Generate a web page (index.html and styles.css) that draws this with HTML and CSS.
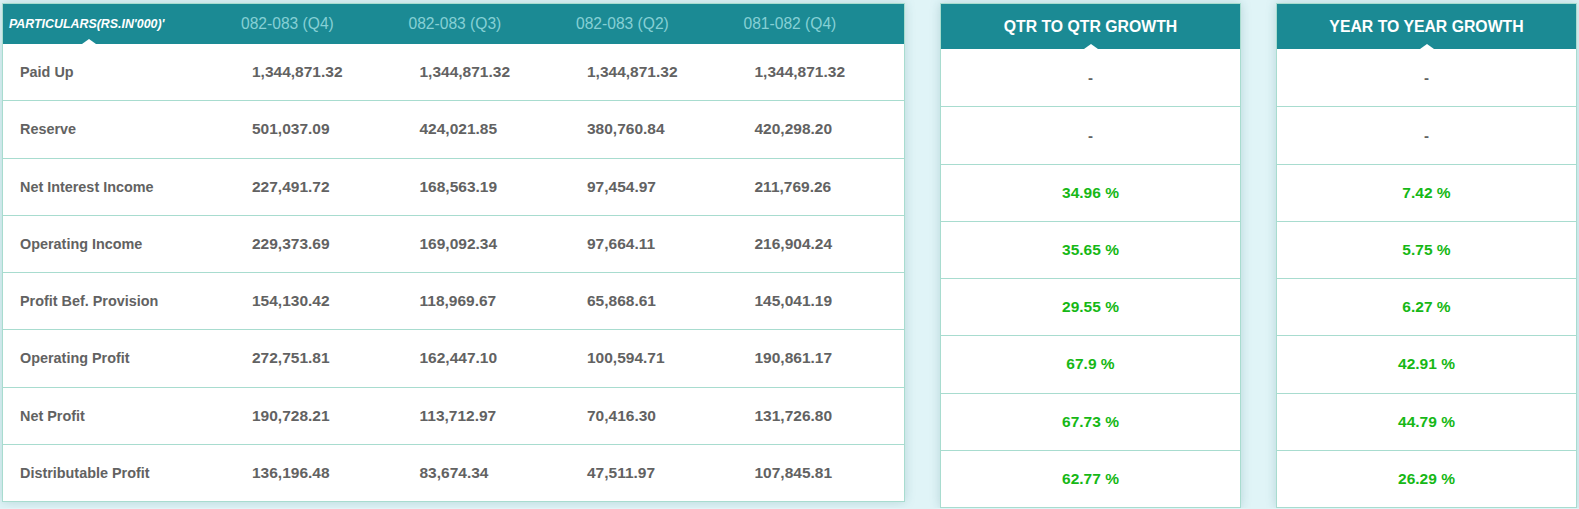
FILE: index.html
```html
<!DOCTYPE html>
<html lang="en">
<head>
<meta charset="utf-8">
<title>Financial Growth</title>
<link rel="stylesheet" href="styles.css">
</head>
<body>
<div class="wrap">
  <section class="card main">
    <div class="head">
      <div class="cell label-h">PARTICULARS(RS.IN'000)'</div>
      <div class="cell num-h">082-083 (Q4)</div>
      <div class="cell num-h">082-083 (Q3)</div>
      <div class="cell num-h">082-083 (Q2)</div>
      <div class="cell num-h">081-082 (Q4)</div>
    </div>
    <div class="row"><div class="cell label">Paid Up</div><div class="cell num">1,344,871.32</div><div class="cell num">1,344,871.32</div><div class="cell num">1,344,871.32</div><div class="cell num">1,344,871.32</div></div>
    <div class="row"><div class="cell label">Reserve</div><div class="cell num">501,037.09</div><div class="cell num">424,021.85</div><div class="cell num">380,760.84</div><div class="cell num">420,298.20</div></div>
    <div class="row"><div class="cell label">Net Interest Income</div><div class="cell num">227,491.72</div><div class="cell num">168,563.19</div><div class="cell num">97,454.97</div><div class="cell num">211,769.26</div></div>
    <div class="row"><div class="cell label">Operating Income</div><div class="cell num">229,373.69</div><div class="cell num">169,092.34</div><div class="cell num">97,664.11</div><div class="cell num">216,904.24</div></div>
    <div class="row"><div class="cell label">Profit Bef. Provision</div><div class="cell num">154,130.42</div><div class="cell num">118,969.67</div><div class="cell num">65,868.61</div><div class="cell num">145,041.19</div></div>
    <div class="row"><div class="cell label">Operating Profit</div><div class="cell num">272,751.81</div><div class="cell num">162,447.10</div><div class="cell num">100,594.71</div><div class="cell num">190,861.17</div></div>
    <div class="row"><div class="cell label">Net Profit</div><div class="cell num">190,728.21</div><div class="cell num">113,712.97</div><div class="cell num">70,416.30</div><div class="cell num">131,726.80</div></div>
    <div class="row"><div class="cell label">Distributable Profit</div><div class="cell num">136,196.48</div><div class="cell num">83,674.34</div><div class="cell num">47,511.97</div><div class="cell num">107,845.81</div></div>
  </section>

  <section class="card growth">
    <div class="ghead">QTR TO QTR GROWTH</div>
    <div class="grow dash">-</div>
    <div class="grow dash">-</div>
    <div class="grow pct">34.96 %</div>
    <div class="grow pct">35.65 %</div>
    <div class="grow pct">29.55 %</div>
    <div class="grow pct">67.9 %</div>
    <div class="grow pct">67.73 %</div>
    <div class="grow pct">62.77 %</div>
  </section>

  <section class="card growth">
    <div class="ghead">YEAR TO YEAR GROWTH</div>
    <div class="grow dash">-</div>
    <div class="grow dash">-</div>
    <div class="grow pct">7.42 %</div>
    <div class="grow pct">5.75 %</div>
    <div class="grow pct">6.27 %</div>
    <div class="grow pct">42.91 %</div>
    <div class="grow pct">44.79 %</div>
    <div class="grow pct">26.29 %</div>
  </section>
</div>
</body>
</html>
```

FILE: styles.css
```css
* { box-sizing: border-box; }

html, body {
  margin: 0;
  padding: 0;
  background: #e0f4f7;
  font-family: "Liberation Sans", Arial, sans-serif;
}

.wrap {
  display: flex;
  align-items: flex-start;
  gap: 35px;
  padding: 3px 0 0 2px;
}

.card {
  background: #fff;
  border: 1px solid #a8dccf;
  box-shadow: 0 0 10px rgba(40, 110, 120, 0.22);
}

.main {
  width: 903px;
}

.head {
  position: relative;
  display: flex;
  height: 40px;
  background: #1b8a94;
  border-bottom: 1px solid #1b8a94;
}

.head::after {
  content: "";
  position: absolute;
  left: 79px;
  bottom: -1px;
  width: 0;
  height: 0;
  border-left: 7px solid transparent;
  border-right: 7px solid transparent;
  border-bottom: 5px solid #fff;
}

.cell {
  display: flex;
  align-items: center;
}

.label-h,
.label {
  width: 231px;
  flex: none;
}

.num-h,
.num {
  width: 167.5px;
  flex: none;
}

.label-h {
  padding-left: 6px;
  color: #fff;
  font-size: 12.4px;
  font-weight: bold;
  font-style: italic;
}

.num-h {
  padding-left: 7px;
  color: #86d0d5;
  font-size: 15.6px;
}

.row {
  display: flex;
  height: 57.25px;
  border-bottom: 1px solid #a8dccf;
}

.row:last-child {
  border-bottom: none;
  height: 56.25px;
}

.label {
  padding-left: 17px;
  color: #626262;
  font-size: 14.4px;
  font-weight: bold;
}

.num {
  padding-left: 18px;
  color: #626262;
  font-size: 15.5px;
  font-weight: bold;
}

.growth {
  width: 301px;
}

.ghead {
  position: relative;
  height: 45px;
  display: flex;
  align-items: center;
  justify-content: center;
  background: #1b8a94;
  color: #fff;
  font-size: 15.8px;
  font-weight: bold;
}

.ghead::after {
  content: "";
  position: absolute;
  left: 50%;
  bottom: 0;
  margin-left: -7px;
  width: 0;
  height: 0;
  border-left: 7px solid transparent;
  border-right: 7px solid transparent;
  border-bottom: 5px solid #fff;
}

.grow {
  height: 57.25px;
  display: flex;
  align-items: center;
  justify-content: center;
  border-top: 1px solid #a8dccf;
  font-weight: bold;
}

.grow:nth-child(2) {
  border-top: none;
}

.dash {
  color: #626262;
  font-size: 15px;
}

.pct {
  color: #16b816;
  font-size: 15.5px;
}
```
